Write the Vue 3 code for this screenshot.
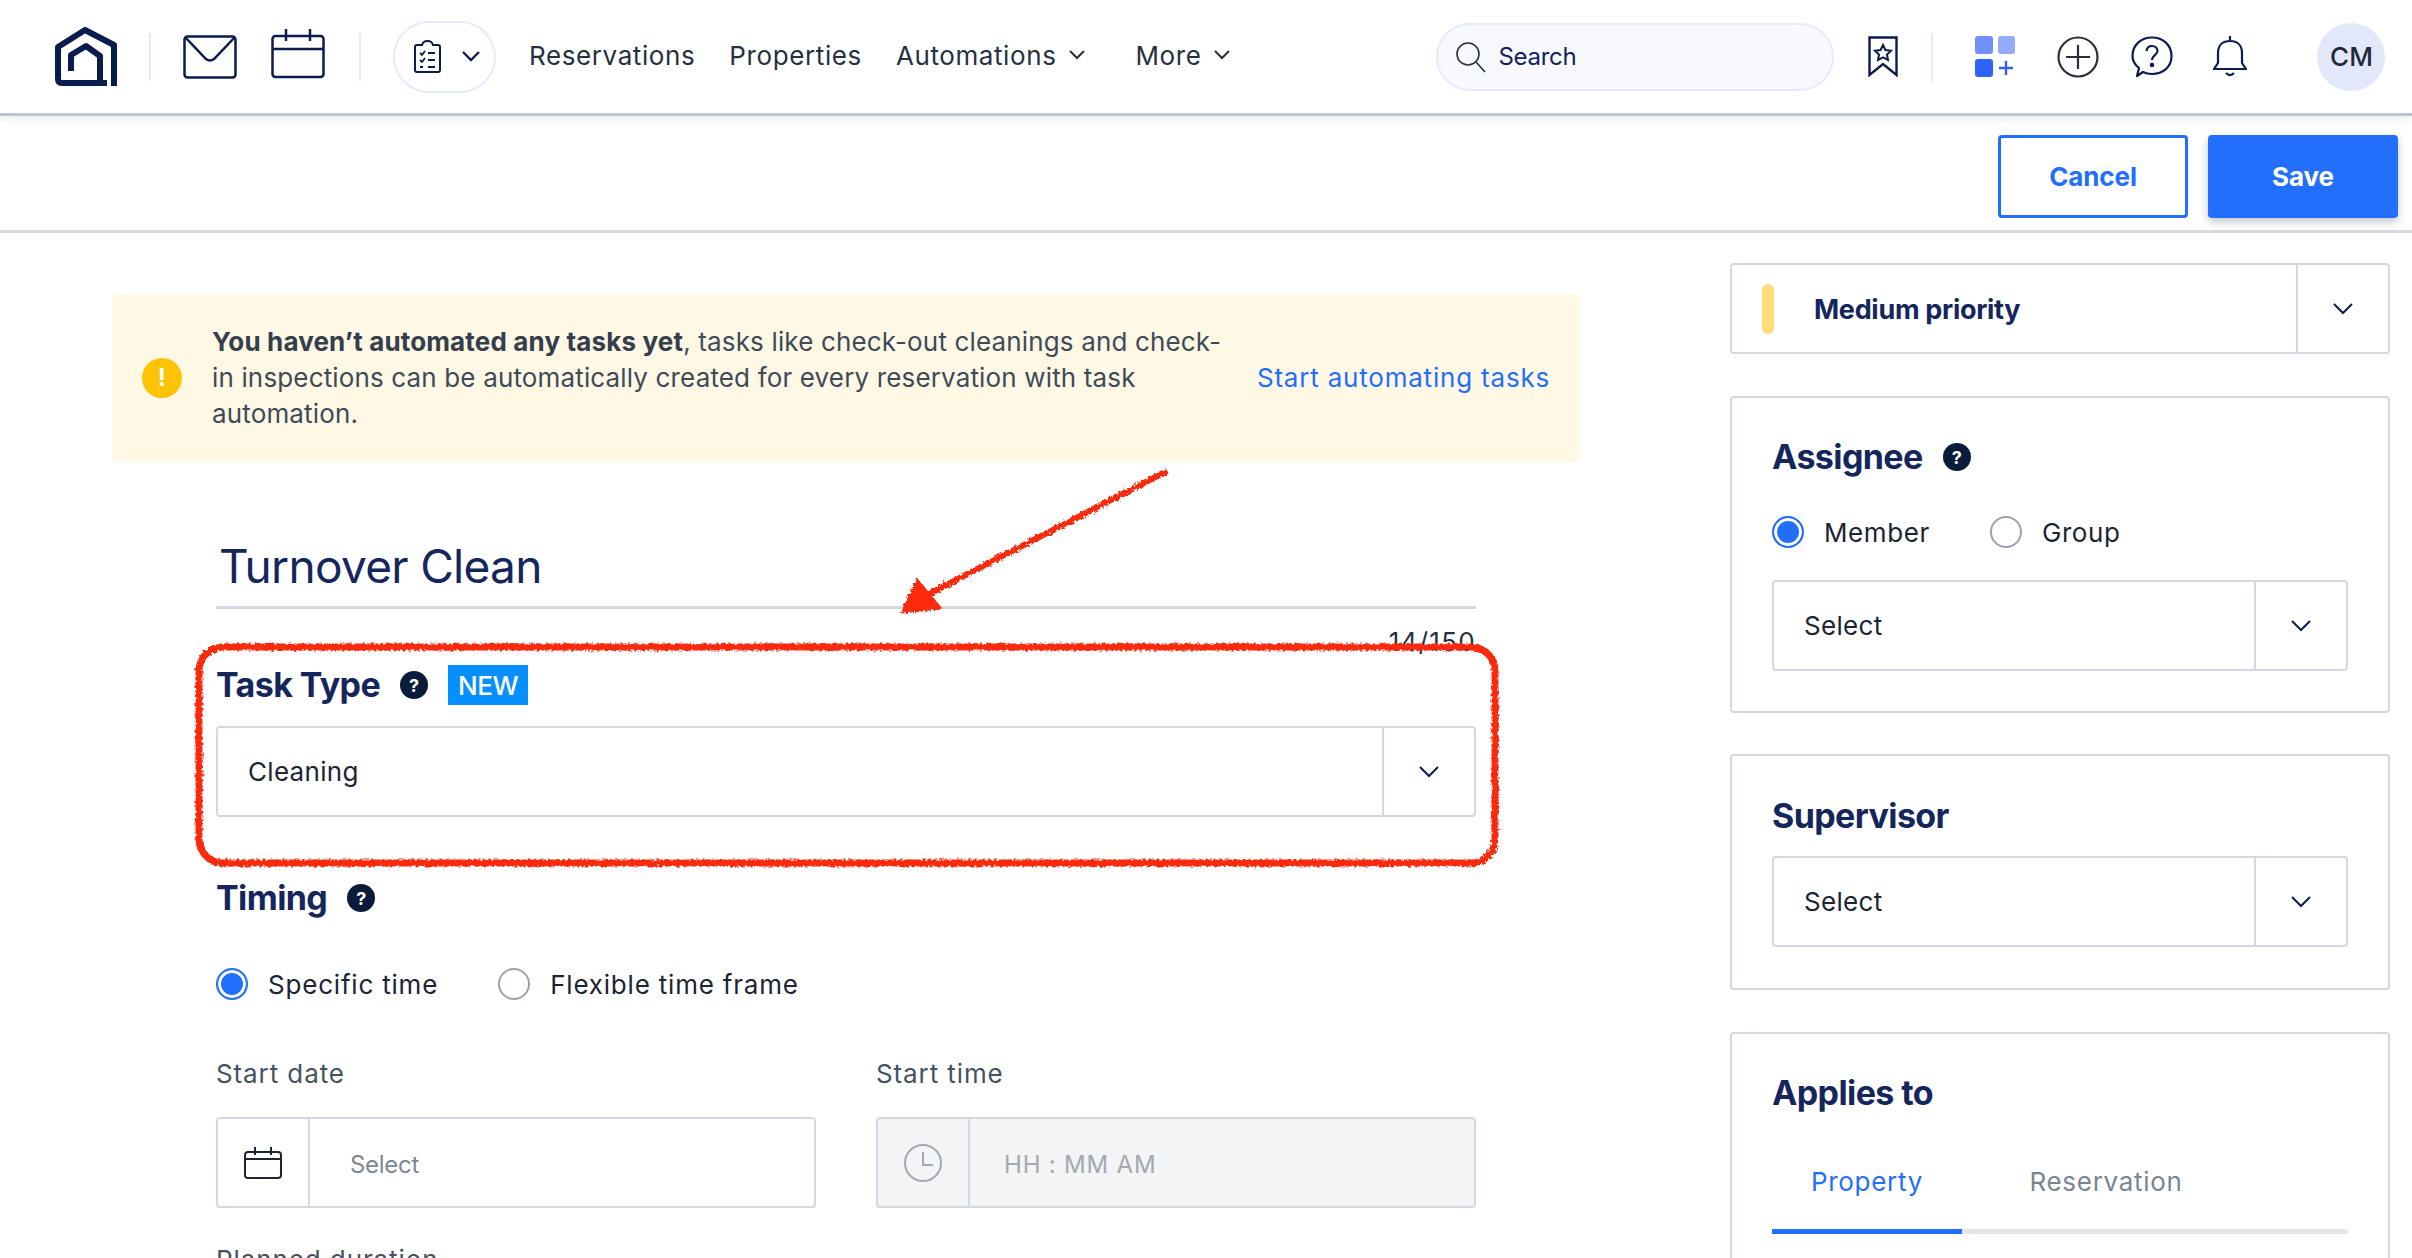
<script setup>
import { ref } from 'vue'

const navLinks = [
  { label: 'Reservations' },
  { label: 'Properties' },
  { label: 'Automations', caret: true },
  { label: 'More', caret: true },
]

const timingMode = ref('specific')
const assigneeMode = ref('member')
const appliesTab = ref('property')
</script>

<template>
  <div class="page">
    <header class="topbar">
      <svg class="logo" width="62" height="60" viewBox="0 0 62 60" fill="none" stroke="#0a1c4d" stroke-width="6">
        <path d="M59 59V18L30 3L3 20V52Q3 56 7 56H52" stroke-linejoin="round" />
        <path d="M16 44V28L31 19L45 29V57" stroke-linejoin="round" />
      </svg>
      <span class="vline first"></span>
      <svg class="mail" width="54" height="44" viewBox="0 0 54 44" fill="none" stroke="#0a1c4d" stroke-width="2.5">
        <rect x="1.5" y="1.5" width="51" height="41" rx="3" />
        <path d="M2 2L23 24Q27 27 31 24L52 2" />
      </svg>
      <svg class="cal" width="54" height="50" viewBox="0 0 54 50" fill="none" stroke="#0a1c4d" stroke-width="2.5">
        <rect x="1.5" y="7" width="51" height="41" rx="3" />
        <path d="M2 20H52M15 0V12M39 0V12" />
      </svg>
      <span class="vline second"></span>
      <button class="task-pill">
        <svg width="27" height="33" viewBox="0 0 27 33" fill="none" stroke="#0a1c4d" stroke-width="2">
          <path d="M8 5H3Q1 5 1 7V30Q1 32 3 32H24Q26 32 26 30V7Q26 5 24 5H19Q18 1 13.5 1T8 5Z" />
          <path d="M6 13L8 15L11 11M14 13H21M6 20L8 22L11 18M14 20H21M6 27H9M14 27H21" stroke-width="1.8" />
        </svg>
        <svg class="chev" width="18" height="11" viewBox="0 0 18 11" fill="none" stroke="#0a1c4d" stroke-width="2.4"><path d="M1 1L9 9L17 1" /></svg>
      </button>
      <nav class="nav">
        <a v-for="link in navLinks" :key="link.label" class="nav-link">
          {{ link.label }}
          <svg v-if="link.caret" width="16" height="10" viewBox="0 0 16 10" fill="none" stroke="#27303f" stroke-width="2"><path d="M1 1L8 8L15 1" /></svg>
        </a>
      </nav>
      <div class="search">
        <svg width="32" height="32" viewBox="0 0 32 32" fill="none" stroke="#27303f" stroke-width="1.6"><circle cx="13" cy="13" r="11" /><path d="M21 21L30 31" /></svg>
        <span>Search</span>
      </div>
      <svg class="bookmark" width="30" height="41" viewBox="0 0 30 41" fill="none" stroke="#0a1c4d" stroke-width="2.4">
        <path d="M1.5 1.5H28.5V39L15 28L1.5 39Z" />
        <path d="M15 9L17.4 14L23 14.8L19 18.6L20 24L15 21.4L10 24L11 18.6L7 14.8L12.6 14Z" stroke-width="2" />
      </svg>
      <span class="vline third"></span>
      <svg class="grid-add" width="40" height="41" viewBox="0 0 40 41">
        <rect x="0" y="0" width="18" height="18" rx="3" fill="#6f8ffb" />
        <rect x="23" y="0" width="17" height="18" rx="3" fill="#93acfb" />
        <rect x="0" y="23" width="18" height="18" rx="3" fill="#2f62f5" />
        <path d="M31 25V39M24 32H38" stroke="#2f62f5" stroke-width="2.4" />
      </svg>
      <svg class="plus" width="42" height="42" viewBox="0 0 42 42" fill="none" stroke="#27303f" stroke-width="2.2">
        <circle cx="21" cy="21" r="19.5" /><path d="M21 9V33M9 21H33" />
      </svg>
      <svg class="help-bubble" width="42" height="42" viewBox="0 0 42 42" fill="none" stroke="#0a1c4d" stroke-width="2.2">
        <path d="M6 40L8 32C3 28 1.500 24 1.500 20C1.500 9 10 1.500 21 1.500S40.500 9 40.500 20S32 38 21 38C17 38 14 37 12 36Z" stroke-linejoin="round" />
        <path d="M15.500 15C16 11 19 10 21 10C24 10 26.500 12 26.500 15C26.500 19 21 19.500 21 24" />
        <circle cx="21" cy="29" r="1.200" fill="#0a1c4d" />
      </svg>
      <svg class="bell" width="34" height="41" viewBox="0 0 34 41" fill="none" stroke="#0a1c4d" stroke-width="2.2">
        <path d="M17 0V5M1 33H33L29 27V17C29 9 24 5 17 5S5 9 5 17V27Z" />
        <path d="M13 37Q17 41 21 37" />
      </svg>
      <div class="avatar">CM</div>
    </header>

    <div class="actionbar">
      <button class="btn btn-cancel">Cancel</button>
      <button class="btn btn-save">Save</button>
    </div>

    <main class="content">
      <section class="left">
        <div class="banner">
          <span class="banner-icon">!</span>
          <p class="banner-text"><b>You haven’t automated any tasks yet</b>, tasks like check-out cleanings and check-in inspections can be automatically created for every reservation with task automation.</p>
          <a class="banner-link">Start automating tasks</a>
        </div>

        <div class="form">
          <div class="title-input">Turnover Clean</div>
          <div class="counter">14/150</div>

          <div class="heading-row task-heading">
            <h3>Task Type</h3>
            <span class="help">?</span>
            <span class="badge">NEW</span>
          </div>
          <div class="select">
            <span class="select-value">Cleaning</span>
            <span class="select-caret">
              <svg width="20" height="12" viewBox="0 0 20 12" fill="none" stroke="#0a1c4d" stroke-width="2"><path d="M1 1L10 10L19 1" /></svg>
            </span>
          </div>

          <div class="heading-row timing-heading">
            <h3>Timing</h3>
            <span class="help">?</span>
          </div>
          <div class="radios timing-radios">
            <label class="radio" @click="timingMode = 'specific'">
              <span class="dot" :class="{ on: timingMode === 'specific' }"></span>Specific time
            </label>
            <label class="radio" @click="timingMode = 'flexible'">
              <span class="dot" :class="{ on: timingMode === 'flexible' }"></span>Flexible time frame
            </label>
          </div>

          <div class="date-grid">
            <div>
              <div class="field-label">Start date</div>
              <div class="input">
                <span class="input-icon">
                  <svg width="38" height="32" viewBox="0 0 38 32" fill="none" stroke="#1d2433" stroke-width="2"><rect x="1" y="5" width="36" height="26" rx="3" /><path d="M1 12H37M11 0V8M27 0V8" /></svg>
                </span>
                <span class="placeholder">Select</span>
              </div>
            </div>
            <div>
              <div class="field-label">Start time</div>
              <div class="input disabled">
                <span class="input-icon">
                  <svg width="38" height="38" viewBox="0 0 38 38" fill="none" stroke="#a2a9b2" stroke-width="2"><circle cx="19" cy="19" r="18" /><path d="M19 8V21H29" /></svg>
                </span>
                <span class="placeholder time">HH : MM AM</span>
              </div>
            </div>
          </div>

          <div class="field-label duration">Planned duration</div>
        </div>
      </section>

      <aside class="right">
        <div class="priority">
          <span class="priority-bar"></span>
          <span class="priority-text">Medium priority</span>
          <span class="select-caret">
            <svg width="20" height="12" viewBox="0 0 20 12" fill="none" stroke="#0a1c4d" stroke-width="2"><path d="M1 1L10 10L19 1" /></svg>
          </span>
        </div>

        <div class="card assignee">
          <div class="heading-row">
            <h3>Assignee</h3>
            <span class="help">?</span>
          </div>
          <div class="radios assignee-radios">
            <label class="radio" @click="assigneeMode = 'member'">
              <span class="dot" :class="{ on: assigneeMode === 'member' }"></span>Member
            </label>
            <label class="radio" @click="assigneeMode = 'group'">
              <span class="dot" :class="{ on: assigneeMode === 'group' }"></span>Group
            </label>
          </div>
          <div class="select">
            <span class="select-value">Select</span>
            <span class="select-caret">
              <svg width="20" height="12" viewBox="0 0 20 12" fill="none" stroke="#0a1c4d" stroke-width="2"><path d="M1 1L10 10L19 1" /></svg>
            </span>
          </div>
        </div>

        <div class="card supervisor">
          <div class="heading-row"><h3>Supervisor</h3></div>
          <div class="select">
            <span class="select-value">Select</span>
            <span class="select-caret">
              <svg width="20" height="12" viewBox="0 0 20 12" fill="none" stroke="#0a1c4d" stroke-width="2"><path d="M1 1L10 10L19 1" /></svg>
            </span>
          </div>
        </div>

        <div class="card applies">
          <div class="heading-row"><h3>Applies to</h3></div>
          <div class="tabs">
            <button class="tab" :class="{ active: appliesTab === 'property' }" @click="appliesTab = 'property'">Property</button>
            <button class="tab" :class="{ active: appliesTab === 'reservation' }" @click="appliesTab = 'reservation'">Reservation</button>
          </div>
        </div>
      </aside>
    </main>

    <!-- red marker drawn over the screenshot -->
    <svg class="markup" width="2412" height="1258" viewBox="0 0 2412 1258" fill="none">
      <defs>
        <filter id="rough" x="-5%" y="-5%" width="110%" height="110%">
          <feTurbulence type="fractalNoise" baseFrequency="0.35" numOctaves="2" seed="4" />
          <feDisplacementMap in="SourceGraphic" scale="5" />
        </filter>
      </defs>
      <g filter="url(#rough)" stroke="#fb2a0f">
        <rect x="199" y="647" width="1296" height="216" rx="24" stroke-width="7" />
        <path d="M1167 471L925 596" stroke-width="6" />
        <path d="M917 580L903 612L940 608Z" fill="#fb2a0f" stroke-width="3" />
      </g>
    </svg>
  </div>
</template>

<style>
html, body {
  height: 1258px;
  overflow: hidden;
  background: #fff;
}
</style>

<style scoped>
.page {
  position: relative;
  width: 2412px;
  height: 1258px;
  overflow: hidden;
  font-family: Inter, "Open Sans", sans-serif;
  color: #27303f;
}

/* top navigation */
.topbar {
  height: 113px;
  display: flex;
  align-items: center;
  padding-left: 55px;
  border-bottom: 3px solid #bfc4cc;
  box-shadow: 0 3px 8px rgba(20, 30, 60, 0.08);
}

.vline {
  width: 2px;
  height: 48px;
  background: #e3e8fa;
}
.vline.first { margin: 0 32px 0 32px; }
.mail { margin-right: 34px; }
.cal { margin-top: -6px; }
.vline.second { margin: 0 32px 0 34px; }
.vline.third { margin: 0 42px 0 33px; }

.task-pill {
  width: 103px;
  height: 72px;
  display: flex;
  align-items: center;
  justify-content: center;
  gap: 21px;
  padding: 0 0 0 4px;
  background: #fff;
  border: 2px solid #e4ebfd;
  border-radius: 36px;
}

.nav {
  display: flex;
  align-items: center;
  margin: 0 0 3px 33px;
  gap: 34px;
}

.nav-link {
  display: flex;
  align-items: center;
  gap: 13px;
  font-size: 26px;
  letter-spacing: 0.6px;
  color: #27303f;
}
.nav-link:last-child { margin-left: 16px; }

.search {
  width: 398px;
  height: 68px;
  margin-left: 206px;
  display: flex;
  align-items: center;
  gap: 11px;
  padding-left: 17px;
  box-sizing: border-box;
  background: #f8f9ff;
  border: 2px solid #e4ebfd;
  border-radius: 34px;
  font-size: 24px;
  letter-spacing: -0.3px;
  color: #14235a;
}

.bookmark { margin-left: 34px; }
.plus { margin-left: 42px; }
.help-bubble { margin-left: 32px; }
.bell { margin-left: 40px; }

.avatar {
  width: 68px;
  height: 68px;
  margin-left: 70px;
  display: flex;
  align-items: center;
  justify-content: center;
  border-radius: 50%;
  background: #e2e7fa;
  font-size: 26px;
  font-weight: 500;
  color: #1f2937;
}

/* cancel / save */
.actionbar {
  height: 117px;
  box-sizing: border-box;
  display: flex;
  justify-content: flex-end;
  gap: 20px;
  padding: 19px 14px 0 0;
  border-bottom: 3px solid #d3d8e1;
}

.btn {
  width: 190px;
  height: 83px;
  border-radius: 4px;
  font-family: inherit;
  font-size: 26px;
  font-weight: 700;
  letter-spacing: -0.1px;
}

.btn-cancel {
  background: #fff;
  color: #226ffd;
  border: 3px solid #226ffd;
}

.btn-save {
  background: #226ffd;
  color: #fff;
  border: none;
  box-shadow: 0 4px 8px rgba(20, 30, 60, 0.25);
}

/* page columns */
.content {
  display: flex;
  align-items: flex-start;
  padding-left: 112px;
}

.left {
  width: 1468px;
  padding-top: 61px;
}

.banner {
  height: 168px;
  box-sizing: border-box;
  display: flex;
  align-items: center;
  padding: 0 30px;
  background: #fef8e4;
  border-radius: 5px;
  font-size: 26px;
  line-height: 36px;
  letter-spacing: 0.15px;
}

.banner-icon {
  flex: none;
  width: 40px;
  height: 40px;
  margin-right: 30px;
  display: flex;
  align-items: center;
  justify-content: center;
  border-radius: 50%;
  background: #fdc406;
  color: #fff;
  font-size: 24px;
  font-weight: 700;
}

.banner-text {
  width: 1016px;
  margin: 0;
  color: #3f4a59;
}
.banner-text b { font-weight: 700; letter-spacing: 0.15px; color: #343e4d; }

.banner-link {
  margin-left: auto;
  white-space: nowrap;
  letter-spacing: 0.8px;
  color: #226ffd;
}

.form {
  width: 1260px;
  margin-left: 104px;
}

.title-input {
  height: 93px;
  margin-top: 54px;
  box-sizing: border-box;
  padding: 23px 0 0 3px;
  border-bottom: 3px solid #d3d8e1;
  font-size: 46px;
  line-height: 54px;
  letter-spacing: -0.7px;
  color: #14265c;
}

.counter {
  margin-top: 17px;
  height: 32px;
  text-align: right;
  font-size: 26px;
  line-height: 32px;
  letter-spacing: 1.3px;
}

.heading-row {
  display: flex;
  align-items: center;
}

h3 {
  margin: 0;
  font-size: 34px;
  line-height: 42px;
  font-weight: 700;
  letter-spacing: -0.6px;
  color: #14265c;
}

.help {
  width: 28px;
  height: 28px;
  margin-left: 20px;
  display: flex;
  align-items: center;
  justify-content: center;
  border-radius: 50%;
  background: #0b1c3a;
  color: #fff;
  font-size: 18px;
  font-weight: 700;
}

.badge {
  width: 80px;
  height: 40px;
  margin-left: 20px;
  display: flex;
  align-items: center;
  justify-content: center;
  background: #068fff;
  color: #fff;
  font-size: 26px;
  font-weight: 500;
  letter-spacing: -0.4px;
}

.task-heading { margin-top: 6px; }

.select {
  height: 91px;
  box-sizing: border-box;
  display: flex;
  align-items: center;
  border: 2px solid #d3d8e1;
  border-radius: 4px;
  background: #fff;
}

.task-heading + .select { margin-top: 20px; }

.select-value {
  flex: 1;
  padding-left: 30px;
  font-size: 26px;
  letter-spacing: 0.3px;
  color: #1d2433;
}

.select-caret {
  width: 90px;
  height: 100%;
  flex: none;
  display: flex;
  align-items: center;
  justify-content: center;
  border-left: 2px solid #d3d8e1;
}

.timing-heading { margin-top: 60px; }

.radios {
  display: flex;
  font-size: 26px;
  letter-spacing: 0.6px;
  color: #1d2433;
}

.radio {
  display: flex;
  align-items: center;
  gap: 20px;
}

.dot {
  width: 32px;
  height: 32px;
  box-sizing: border-box;
  border: 2px solid #9aa3ad;
  border-radius: 50%;
  background: #fff;
}

.dot.on {
  border-color: #226ffd;
  background: #226ffd;
  box-shadow: inset 0 0 0 3px #fff;
}

.timing-radios {
  margin-top: 49px;
  gap: 60px;
  letter-spacing: 0.8px;
}

.date-grid {
  display: grid;
  grid-template-columns: 1fr 1fr;
  column-gap: 60px;
  margin-top: 56px;
}

.field-label {
  font-size: 26px;
  line-height: 36px;
  letter-spacing: 0.9px;
  color: #47525f;
}

.input {
  height: 91px;
  margin-top: 25px;
  box-sizing: border-box;
  display: flex;
  align-items: center;
  border: 2px solid #d3d8e1;
  border-radius: 4px;
}

.input.disabled { background: #f3f4f5; }

.input-icon {
  width: 90px;
  height: 100%;
  flex: none;
  display: flex;
  align-items: center;
  justify-content: center;
  border-right: 2px solid #d3d8e1;
}

.placeholder {
  padding: 3px 0 0 40px;
  font-size: 24px;
  letter-spacing: -0.3px;
  color: #7f8791;
}

.placeholder.time {
  padding-left: 34px;
  letter-spacing: 0.8px;
  color: #a2a9b2;
}

.duration { margin-top: 34px; }

/* right column */
.right {
  width: 660px;
  margin-left: 150px;
  padding-top: 30px;
}

.priority {
  height: 91px;
  box-sizing: border-box;
  display: flex;
  align-items: center;
  border: 2px solid #d3d8e1;
  border-radius: 4px;
}

.priority-bar {
  width: 12px;
  height: 50px;
  margin-left: 30px;
  border-radius: 6px;
  background: #ffdc78;
}

.priority-text {
  flex: 1;
  margin-left: 40px;
  padding-top: 2px;
  font-size: 27px;
  font-weight: 700;
  letter-spacing: -0.3px;
  color: #14265c;
}

.card {
  box-sizing: border-box;
  margin-top: 42px;
  padding: 38px 40px 0;
  border: 2px solid #d3d8e1;
  border-radius: 4px;
}

.assignee { height: 317px; }
.supervisor { height: 236px; margin-top: 41px; }
.applies { height: 320px; }

.assignee-radios {
  margin: 38px 0 32px;
  gap: 60px;
}

.supervisor .select { margin-top: 19px; }
.supervisor .heading-row { padding-top: 1px; }

.tabs {
  display: flex;
  margin-top: 47px;
  width: 576px;
  border-bottom: 5px solid #e3e6ea;
}

.tab {
  width: 190px;
  height: 73px;
  margin-bottom: -5px;
  padding: 0 0 28px;
  background: none;
  border: none;
  border-bottom: 5px solid transparent;
  font-family: inherit;
  font-size: 26px;
  letter-spacing: 0.7px;
  color: #7b8590;
}
.tab + .tab { width: 288px; }

.tab.active {
  color: #226ffd;
  border-bottom-color: #226ffd;
}

.markup {
  position: absolute;
  left: 0;
  top: 0;
  pointer-events: none;
}
</style>
